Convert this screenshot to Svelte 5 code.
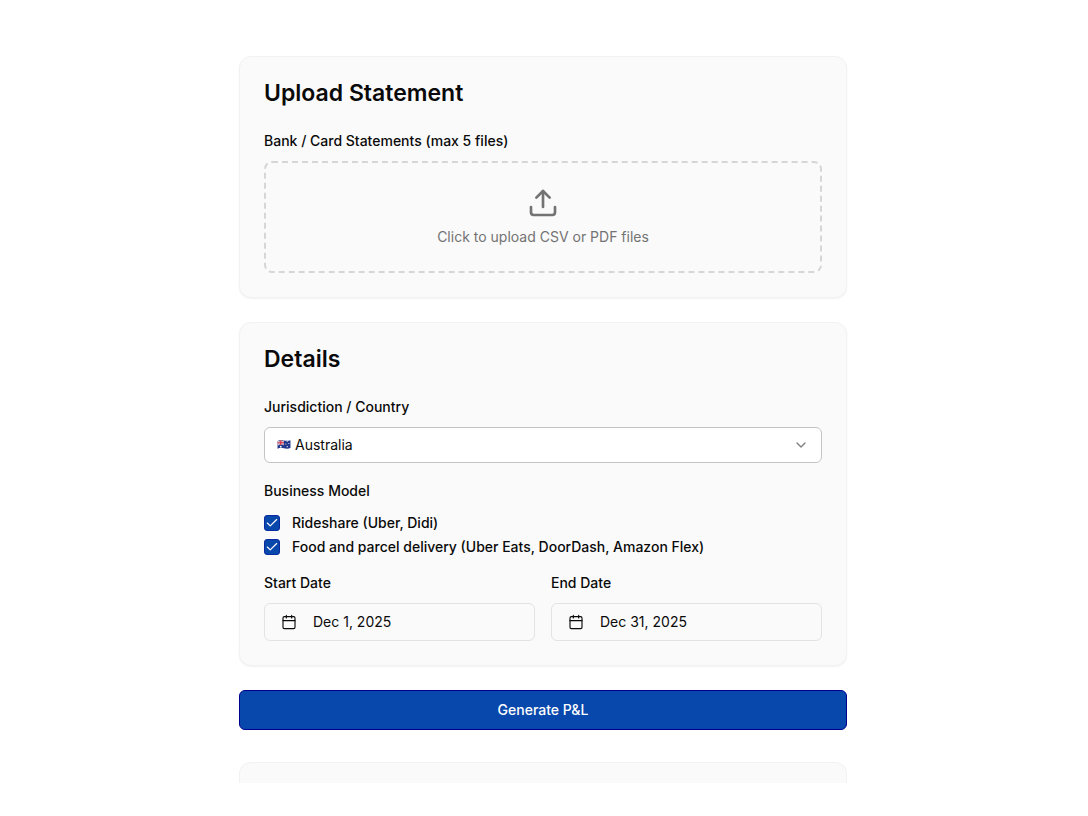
<script lang="ts">
  const countries = ['Australia', 'New Zealand', 'United Kingdom', 'Canada'];

  let country = 'Australia';

  let businessModels = [
    { id: 'rideshare', name: 'Rideshare (Uber, Didi)', checked: true },
    { id: 'delivery', name: 'Food and parcel delivery (Uber Eats, DoorDash, Amazon Flex)', checked: true }
  ];

  const dates = [
    { id: 'start-date', label: 'Start Date', value: 'Dec 1, 2025' },
    { id: 'end-date', label: 'End Date', value: 'Dec 31, 2025' }
  ];

  let fileInput: HTMLInputElement;
</script>

<main>
  <form on:submit|preventDefault>
    <section class="card">
      <h2>Upload Statement</h2>
      <div class="field">
        <label for="files">Bank / Card Statements (max 5 files)</label>
        <input id="files" type="file" accept=".csv,.pdf" multiple hidden bind:this={fileInput} />
        <button type="button" class="dropzone" on:click={() => fileInput.click()}>
          <svg class="upload-icon" viewBox="0 0 24 24" aria-hidden="true">
            <path d="M12 15V3" />
            <path d="m7 8 5-5 5 5" />
            <path d="M3 15v4a2 2 0 0 0 2 2h14a2 2 0 0 0 2-2v-4" />
          </svg>
          <span>Click to upload CSV or PDF files</span>
        </button>
      </div>
    </section>

    <section class="card">
      <h2>Details</h2>
      <div class="field">
        <label for="country">Jurisdiction / Country</label>
        <div class="select-wrap">
          <select id="country" bind:value={country}>
            {#each countries as name}
              <option value={name}>{name}</option>
            {/each}
          </select>
          {#if country === 'Australia'}
            <svg class="flag" viewBox="0 0 26 20" aria-hidden="true">
              <path fill="#20388c" d="M1 3.5C5 1 9 1.5 13 2.500s8 1 12-.5v14.500c-4 1.500-8 1.500-12 .5s-8-1.500-12 1z" />
              <path stroke="#e8c8d4" stroke-width="2" d="m1.500 3.500 11 7M1.500 11 12.500 3" />
              <path stroke="#f0d0d8" stroke-width="3.500" d="M7 2v9M1 6.800h12" />
              <path stroke="#d22f3c" stroke-width="2.200" d="M7 2v9M1 6.800h12" />
              <circle cx="7" cy="14" r="1.600" fill="#fff" />
              <circle cx="19" cy="4.500" r="1" fill="#fff" />
              <circle cx="16.500" cy="9" r="1" fill="#fff" />
              <circle cx="22" cy="8" r="1" fill="#fff" />
              <circle cx="19" cy="14" r="1.100" fill="#fff" />
            </svg>
          {/if}
          <svg class="chevron" viewBox="0 0 24 24" aria-hidden="true">
            <path d="m6 9 6 6 6-6" />
          </svg>
        </div>
      </div>

      <fieldset>
        <legend>Business Model</legend>
        {#each businessModels as model}
          <div class="check-row">
            <span class="check">
              <input id={model.id} type="checkbox" bind:checked={model.checked} />
              <svg viewBox="0 0 24 24" aria-hidden="true">
                <path d="M20 6 9 17l-5-5" />
              </svg>
            </span>
            <label for={model.id}>{model.name}</label>
          </div>
        {/each}
      </fieldset>

      <div class="dates">
        {#each dates as date}
          <div class="field">
            <label for={date.id}>{date.label}</label>
            <button type="button" class="date-button" id={date.id}>
              <svg viewBox="0 0 24 24" aria-hidden="true">
                <path d="M8 2v4M16 2v4M3 10h18" />
                <rect x="3" y="4" width="18" height="18" rx="2" />
              </svg>
              <span>{date.value}</span>
            </button>
          </div>
        {/each}
      </div>
    </section>

    <button type="submit" class="generate">Generate P&amp;L</button>
  </form>

  <section class="card next"></section>
</main>

<style>
  :global(body) {
    background: #fff;
  }

  main {
    box-sizing: border-box;
    max-width: 674px;
    margin: 0 auto;
    padding: 56px 34px 32px 32px;
    font-family: Inter, 'Liberation Sans', sans-serif;
    font-size: 14px;
    line-height: 24px;
    color: #0a0a0a;
  }

  form {
    display: flex;
    flex-direction: column;
    gap: 24px;
  }

  button,
  select {
    box-sizing: border-box;
    font: inherit;
    color: inherit;
    cursor: pointer;
  }

  svg {
    fill: none;
    stroke-linecap: round;
    stroke-linejoin: round;
  }

  .card {
    padding: 24px;
    background: #fafafa;
    border: 1px solid #f2f2f2;
    border-radius: 12px;
    box-shadow: 0 1px 2px rgba(0, 0, 0, 0.05);
  }

  h2 {
    margin: 0 0 24px;
    font-size: 23px;
    line-height: 24px;
    font-weight: 600;
  }

  .field {
    display: flex;
    flex-direction: column;
    gap: 8px;
  }

  .field label,
  legend,
  .check-row label {
    font-weight: 500;
  }

  .dropzone {
    display: flex;
    flex-direction: column;
    align-items: center;
    gap: 8px;
    padding: 24px;
    line-height: 20px;
    color: #737373;
    background: none;
    border: 2px dashed #d6d6d6;
    border-radius: 8px;
  }

  .upload-icon {
    width: 32px;
    height: 32px;
    stroke: #737373;
    stroke-width: 2;
  }

  .select-wrap {
    position: relative;
  }

  select {
    display: block;
    width: 100%;
    height: 36px;
    padding: 0 36px 0 30px;
    appearance: none;
    background: #fff;
    border: 1px solid #c4c4c4;
    border-radius: 6px;
  }

  .flag {
    position: absolute;
    top: 12px;
    left: 13px;
    width: 14px;
    height: 11px;
    stroke-linecap: butt;
    pointer-events: none;
  }

  .chevron {
    position: absolute;
    top: 10px;
    right: 13px;
    width: 16px;
    height: 16px;
    stroke: #808080;
    stroke-width: 2;
    pointer-events: none;
  }

  fieldset {
    min-width: 0;
    margin: 16px 0 12px;
    padding: 0;
    border: 0;
  }

  legend {
    margin-bottom: 8px;
    padding: 0;
  }

  .check-row {
    display: flex;
    align-items: center;
    gap: 12px;
  }

  .check {
    display: grid;
    width: 16px;
    height: 16px;
  }

  .check input,
  .check svg {
    grid-area: 1 / 1;
    box-sizing: border-box;
    width: 16px;
    height: 16px;
    margin: 0;
  }

  .check input {
    appearance: none;
    border: 1px solid #0a2a9e;
    border-radius: 3px;
  }

  .check input:checked {
    background: #0847ab;
  }

  .check svg {
    padding: 1px;
    stroke: #fff;
    stroke-width: 2;
    pointer-events: none;
  }

  .check input:not(:checked) + svg {
    visibility: hidden;
  }

  .dates {
    display: grid;
    grid-template-columns: 1fr 1fr;
    gap: 16px;
  }

  .date-button {
    display: flex;
    align-items: center;
    gap: 16px;
    height: 38px;
    padding: 0 16px;
    background: none;
    border: 1px solid #e3e3e3;
    border-radius: 6px;
  }

  .date-button svg {
    width: 16px;
    height: 16px;
    stroke: #0a0a0a;
    stroke-width: 1.7;
  }

  .generate {
    height: 40px;
    padding: 0 32px;
    font-weight: 500;
    color: #fff;
    background: #0847ab;
    border: 1px solid #00008f;
    border-radius: 6px;
  }

  .next {
    height: 20px;
    margin-top: 32px;
    padding: 0;
    border-bottom: 0;
    border-radius: 12px 12px 0 0;
    box-shadow: none;
  }
</style>
